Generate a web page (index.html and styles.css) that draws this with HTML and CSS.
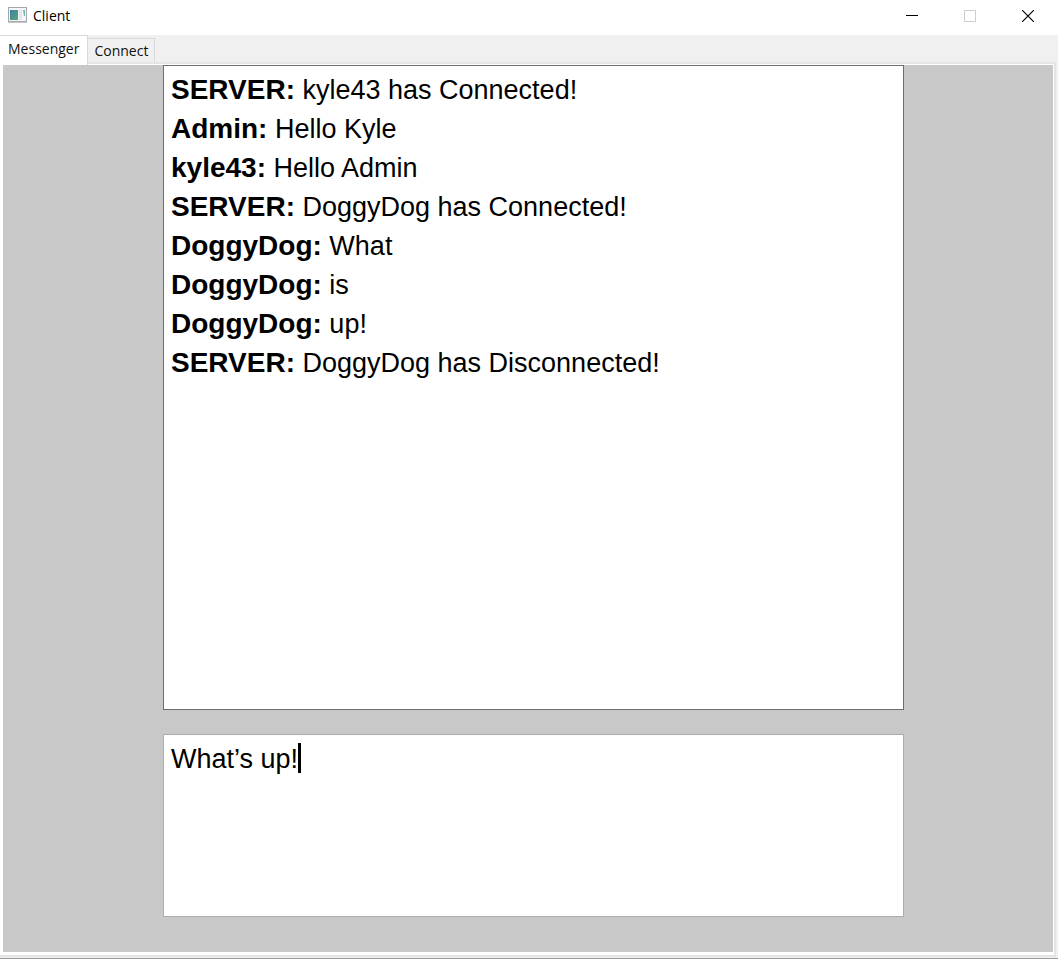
FILE: index.html
```html
<!DOCTYPE html>
<html lang="en">
<head>
<meta charset="utf-8">
<title>Client</title>
<link rel="stylesheet" href="styles.css">
</head>
<body>
<header class="titlebar">
  <svg class="app-icon" width="19" height="16" viewBox="0 0 19 16" aria-hidden="true">
    <defs><linearGradient id="pane" x1="0" y1="0" x2="1" y2="1"><stop offset="0" stop-color="#3f7fa0"/><stop offset="1" stop-color="#55a878"/></linearGradient></defs>
    <rect x=".5" y=".5" width="18" height="14" fill="#f4f5f8" stroke="#a3a7ae"/>
    <path d="M0 15.5h19" stroke="#c4c6cb"/>
    <rect x="2" y="3" width="8" height="10" fill="url(#pane)"/>
    <rect x="11" y="3" width="3" height="10" fill="#e3e6ee"/>
    <path d="M15 3h2v6h-1z" fill="#74b5a5"/>
  </svg>
  <h1 class="title">Client</h1>
  <div class="window-buttons">
    <button type="button" aria-label="Minimize"><svg width="12" height="12" viewBox="0 0 12 12"><path d="M0 5.5h12" stroke="#000"/></svg></button>
    <button type="button" aria-label="Maximize" disabled><svg width="12" height="12" viewBox="0 0 12 12"><path d="M.5.5h11v11H.5z" fill="none" stroke="#ccc"/></svg></button>
    <button type="button" aria-label="Close"><svg width="12" height="12" viewBox="0 0 12 12"><path d="M0 0l12 12M12 0L0 12" stroke="#000" stroke-width="1.2"/></svg></button>
  </div>
</header>
<div class="tabs" role="tablist">
  <button type="button" class="tab active" role="tab" aria-selected="true">Messenger</button>
  <button type="button" class="tab" role="tab" aria-selected="false">Connect</button>
</div>
<div class="frame">
  <main class="panel">
    <ul class="log">
      <li><b>SERVER:</b> kyle43 has Connected!</li>
      <li><b>Admin:</b> Hello Kyle</li>
      <li><b>kyle43:</b> Hello Admin</li>
      <li><b>SERVER:</b> DoggyDog has Connected!</li>
      <li><b>DoggyDog:</b> What</li>
      <li><b>DoggyDog:</b> is</li>
      <li><b>DoggyDog:</b> up!</li>
      <li><b>SERVER:</b> DoggyDog has Disconnected!</li>
    </ul>
    <div class="composer">
      <textarea class="message" aria-label="Message">What’s up!</textarea>
      <span class="caret"></span>
    </div>
  </main>
</div>
</body>
</html>
```
FILE: styles.css
```css
* { box-sizing: border-box; }
body {
  margin: 0;
  min-height: 100vh;
  display: flex;
  flex-direction: column;
  background: #f0f0f0;
  border-bottom: 1px solid #999;
  font-family: "Open Sans", "Noto Sans", sans-serif;
  font-size: 14px;
  line-height: 20px;
  color: #000;
}
.titlebar {
  display: flex;
  align-items: center;
  height: 35px;
  padding: 0 1px 3px 8px;
  background: #fff;
}
.app-icon { margin-right: 6px; margin-bottom: 2px; }
.title { margin: 0; font-size: 14px; font-weight: 400; }
.window-buttons { display: flex; margin-left: auto; align-self: stretch; }
.window-buttons button {
  display: flex;
  align-items: center;
  justify-content: center;
  width: 58px;
  border: 0;
  padding: 0;
  background: none;
}
.tabs {
  display: flex;
  align-items: flex-start;
  height: 27px;
}
.tab {
  height: 25px;
  margin: 3px 0 0;
  padding: 0 6px;
  border: 1px solid #d9d9d9;
  border-left: 0;
  background: #f0f0f0;
  font: inherit;
  line-height: 24px;
  color: #111;
  white-space: nowrap;
}
.tab.active {
  position: relative;
  height: 30px;
  margin: 0;
  padding: 0 8px 4px;
  border-bottom: 0;
  background: #fff;
}
.frame {
  flex: 1;
  display: flex;
  margin: 0 2px 1px 0;
  border: solid #e4e4e4;
  border-width: 2px 2px 2px 0;
}
.panel {
  flex: 1;
  display: flex;
  flex-direction: column;
  gap: 24px;
  padding: 0 149px 35px 160px;
  border: solid #fff;
  border-width: 1px 1px 3px 3px;
  background: #c8c8c8;
}
.log {
  flex: 1;
  margin: 0;
  padding: 5px 7px;
  border: 1px solid #6e6e6e;
  background: #fff;
  list-style: none;
  font: 27px/39px "Liberation Sans", Arial, sans-serif;
}
.log b { font-size: 28px; line-height: 1; }
.composer { position: relative; display: flex; }
.message {
  flex: 1;
  height: 183px;
  margin: 0;
  padding: 5px 7px;
  border: 1px solid #abadb3;
  outline: 0;
  resize: none;
  background: #fff;
  color: #000;
  caret-color: transparent;
  font: 27px/39px "Liberation Sans", Arial, sans-serif;
}
.caret {
  position: absolute;
  left: 135px;
  top: 9px;
  width: 3px;
  height: 30px;
  background: #000;
}
```
